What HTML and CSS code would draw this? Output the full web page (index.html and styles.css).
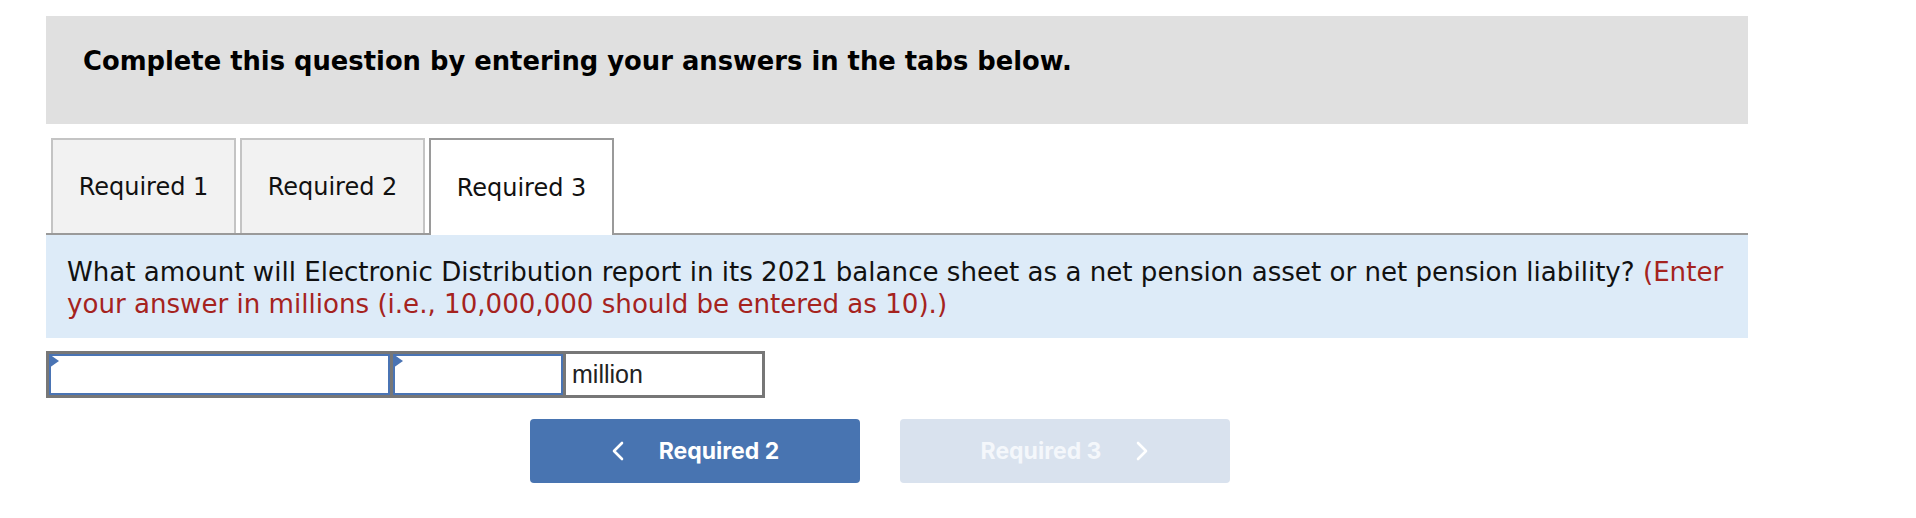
FILE: index.html
```html
<!DOCTYPE html>
<html>
<head>
<meta charset="utf-8">
<link rel="stylesheet" href="styles.css">
</head>
<body>
<div class="wrap">
  <div class="header">Complete this question by entering your answers in the tabs below.</div>
  <div class="tabs">
    <div class="tab">Required 1</div>
    <div class="tab">Required 2</div>
    <div class="tab active">Required 3</div>
  </div>
  <div class="question">What amount will Electronic Distribution report in its 2021 balance sheet as a net pension asset or net pension liability? <span class="note">(Enter</span> <span class="note">your answer in millions (i.e., 10,000,000 should be entered as 10).)</span></div>
  <div class="answer">
    <div class="cell cell-a"><div class="input"><span class="flag"></span></div></div>
    <div class="cell cell-b"><div class="input"><span class="flag"></span></div></div>
    <div class="cell cell-c">million</div>
  </div>
  <div class="nav">
    <button class="btn prev"><svg class="chev" width="14" height="20" viewBox="0 0 14 20"><path d="M11 2 L3 10 L11 18" fill="none" stroke="#fff" stroke-width="2.6" stroke-linecap="round" stroke-linejoin="round"/></svg><span>Required 2</span></button>
    <button class="btn next" disabled><span>Required 3</span><svg class="chev" width="14" height="20" viewBox="0 0 14 20"><path d="M3 2 L11 10 L3 18" fill="none" stroke="#fff" stroke-width="2.6" stroke-linecap="round" stroke-linejoin="round"/></svg></button>
  </div>
</div>
</body>
</html>
```
FILE: styles.css
```css
html, body {
  margin: 0;
  padding: 0;
  background: #fff;
}
body {
  font-family: "DejaVu Sans", Verdana, sans-serif;
  color: #000;
}
.wrap {
  margin: 16px 0 0 46px;
  width: 1702px;
}
.header {
  background: #e0e0e0;
  height: 108px;
  box-sizing: border-box;
  padding: 28px 0 0 37px;
  font-weight: bold;
  font-size: 25.8px;
  line-height: 34px;
  color: #000;
}
.tabs {
  display: flex;
  gap: 4px;
  margin-top: 14px;
  padding-left: 5px;
  border-bottom: 2px solid #9a9a9a;
  height: 95px;
}
.tab {
  width: 185px;
  box-sizing: border-box;
  border: 2px solid #c4c4c4;
  border-bottom: none;
  background: #f2f2f2;
  font-size: 24px;
  display: flex;
  align-items: center;
  justify-content: center;
  color: #111;
}
.tab.active {
  background: #fff;
  border-color: #9a9a9a;
  margin-bottom: -2px;
  height: 97px;
}
.question {
  background: #ddebf8;
  height: 103px;
  box-sizing: border-box;
  padding: 21px 8px 0 21px;
  font-size: 26.1px;
  line-height: 32px;
  color: #111;
}
.note {
  color: #a5231e;
}
.answer {
  display: flex;
  margin-top: 13px;
  width: 719px;
  height: 47px;
  box-sizing: border-box;
  border: 3px solid #777;
  background: #777;
  gap: 3px;
}
.cell {
  background: #fff;
  position: relative;
}
.cell-a { width: 341px; }
.cell-b { width: 170px; }
.cell-c {
  flex: 1;
  font-family: "Liberation Sans", Arial, sans-serif;
  font-size: 25px;
  line-height: 41px;
  padding-left: 6px;
  color: #222;
}
.input {
  height: 100%;
  box-sizing: border-box;
  border: 2px solid #4a74b4;
  position: relative;
}
.flag {
  position: absolute;
  left: -2px;
  top: -2px;
  width: 0;
  height: 0;
  border-top: 7px solid transparent;
  border-bottom: 7px solid transparent;
  border-left: 10px solid #4a74b4;
}
.nav {
  display: flex;
  gap: 40px;
  margin-top: 21px;
  padding-left: 484px;
}
.btn {
  width: 330px;
  height: 64px;
  border: none;
  border-radius: 4px;
  display: flex;
  align-items: center;
  justify-content: center;
  gap: 34px;
  font-family: Inter, "Liberation Sans", sans-serif;
  font-weight: bold;
  font-size: 23px;
  color: #fff;
  padding: 0;
}
.btn.prev {
  background: #4874b1;
}
.btn.next {
  background: #d9e2ee;
  color: #f4f7fb;
}
.chev {
  display: block;
}
```
